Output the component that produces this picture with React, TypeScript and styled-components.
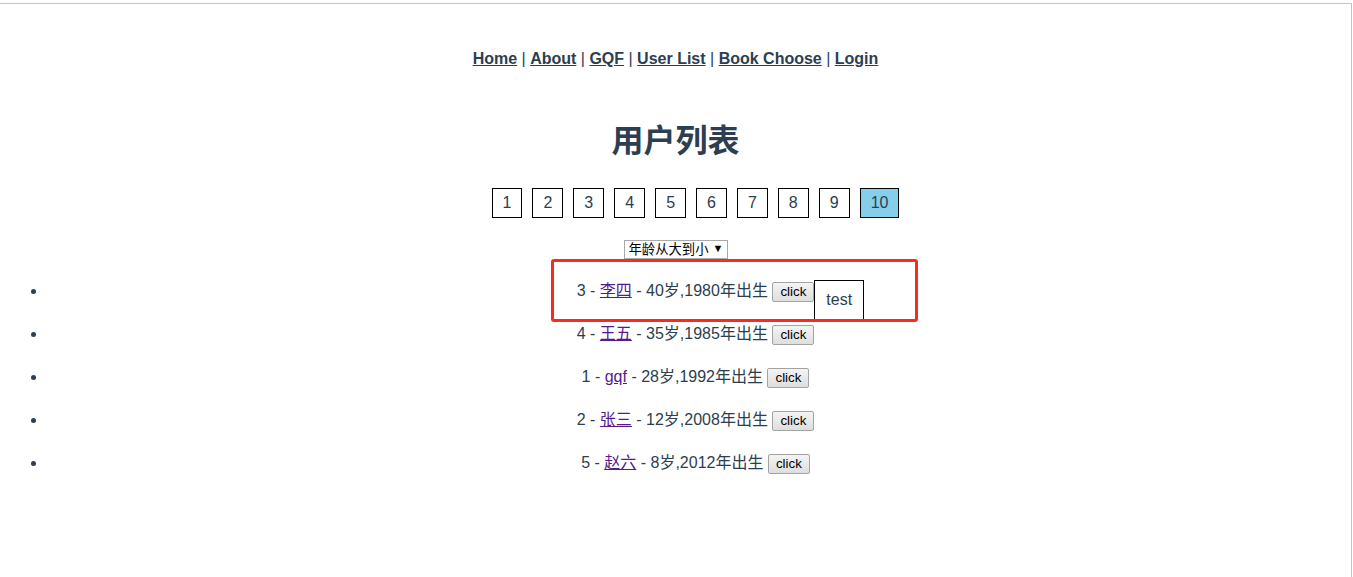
import React from "react";
import styled, { createGlobalStyle } from "styled-components";

const Global = createGlobalStyle`
  html, body { margin: 0; padding: 0; background: #fff; }
  body { font-family: "Liberation Sans", Arial, "Noto Sans CJK SC", sans-serif; }
`;

const Frame = styled.div`
  position: relative;
  box-sizing: border-box;
  width: 1352px;
  min-height: 574px;
  margin-top: 3px;
  border-top: 1px solid #c4c4c4;
  border-right: 1px solid #c4c4c4;
  font-family: "Liberation Sans", Arial, "Noto Sans CJK SC", sans-serif;
  color: #2c3e50;
  text-align: center;
  font-size: 16px;
`;

const Nav = styled.nav`
  padding: 46px 30px 29px;
  line-height: 18px;
`;

const NavLink = styled.a`
  font-weight: bold;
  color: #2c3e50;
  text-decoration: underline;
`;

const Title = styled.h1`
  margin: 26px 0 0;
  font-size: 32px;
  line-height: 37px;
  font-weight: bold;
  font-family: "Liberation Sans", "Noto Sans CJK SC", sans-serif;
`;

const Pager = styled.ul`
  display: flex;
  justify-content: center;
  gap: 10px;
  list-style: none;
  margin: 28px 0 0;
  padding: 0 0 0 40px;
`;

const PageItem = styled.li<{ $active?: boolean }>`
  box-sizing: border-box;
  height: 30px;
  padding: 5px 10px;
  line-height: 18px;
  border: 1px solid #000;
  background: ${(p) => (p.$active ? "#87ceeb" : "#fff")};
  color: #2c3e50;
`;

const SelectWrap = styled.div`
  margin-top: 22px;
  display: flex;
  justify-content: center;
`;

const SelectBox = styled.span`
  position: relative;
  display: inline-block;
`;

const Select = styled.select`
  appearance: none;
  -webkit-appearance: none;
  box-sizing: border-box;
  width: 104px;
  height: 19px;
  margin: 0;
  padding: 0 0 0 4px;
  border: 1px solid #a9a9a9;
  border-radius: 0;
  background: #fff;
  color: #000;
  font-family: "Liberation Sans", "Noto Sans CJK SC", sans-serif;
  font-size: 13.33px;
  line-height: 17px;
`;

const Arrow = styled.span`
  position: absolute;
  right: 4px;
  top: 1px;
  font-size: 11px;
  line-height: 14px;
  color: #000;
  pointer-events: none;
`;

const List = styled.ul`
  margin: 21px 0 0;
  padding: 0 0 0 40px;
  list-style: none;
`;

const Row = styled.li`
  position: relative;
  line-height: 22px;
  margin-bottom: 21px;

  &::before {
    content: "";
    position: absolute;
    left: -9px;
    top: 9px;
    width: 5px;
    height: 5px;
    border-radius: 50%;
    background: #2c3e50;
  }
`;

const Name = styled.a`
  color: #551a8b;
  text-decoration: underline;
`;

const BtnWrap = styled.span`
  position: relative;
  display: inline-block;
`;

const Button = styled.button`
  box-sizing: border-box;
  height: 20px;
  margin: 0;
  padding: 1px 7px;
  border: 1px solid #a3a3a3;
  border-radius: 2px;
  background: linear-gradient(#f4f4f4, #dedede);
  color: #000;
  font-family: "Liberation Sans", Arial, sans-serif;
  font-size: 13.33px;
  line-height: 16px;
  vertical-align: baseline;
`;

const Tip = styled.span`
  position: absolute;
  left: 100%;
  top: 0;
  box-sizing: border-box;
  padding: 10px 11px;
  border: 1px solid #000;
  background: #fff;
  color: #2c3e50;
  line-height: 18px;
  white-space: nowrap;
`;

const Highlight = styled.div`
  position: absolute;
  left: 551px;
  top: 255px;
  box-sizing: border-box;
  width: 367px;
  height: 63px;
  border: 3px solid #fb2a1c;
  border-radius: 3px;
  pointer-events: none;
`;

const users = [
  { id: 3, name: "李四", age: 40, year: 1980, tip: true },
  { id: 4, name: "王五", age: 35, year: 1985 },
  { id: 1, name: "gqf", age: 28, year: 1992 },
  { id: 2, name: "张三", age: 12, year: 2008 },
  { id: 5, name: "赵六", age: 8, year: 2012 },
];

const navItems = ["Home", "About", "GQF", "User List", "Book Choose", "Login"];

export default function App() {
  return (
    <>
      <Global />
      <Frame>
        <Nav>
          {navItems.map((n, i) => (
            <React.Fragment key={n}>
              {i > 0 && " | "}
              <NavLink href="#">{n}</NavLink>
            </React.Fragment>
          ))}
        </Nav>
        <Title>用户列表</Title>
        <Pager>
          {Array.from({ length: 10 }, (_, i) => (
            <PageItem key={i} $active={i === 9}>
              {i + 1}
            </PageItem>
          ))}
        </Pager>
        <SelectWrap>
          <SelectBox>
            <Select defaultValue="desc">
              <option value="desc">年龄从大到小</option>
              <option value="asc">年龄从小到大</option>
            </Select>
            <Arrow>▼</Arrow>
          </SelectBox>
        </SelectWrap>
        <List>
          {users.map((u) => (
            <Row key={u.id}>
              {u.id} - <Name href="#">{u.name}</Name> - {u.age}岁,{u.year}年出生{" "}
              <BtnWrap>
                <Button>click</Button>
                {u.tip && <Tip>test</Tip>}
              </BtnWrap>
            </Row>
          ))}
        </List>
        <Highlight />
      </Frame>
    </>
  );
}
